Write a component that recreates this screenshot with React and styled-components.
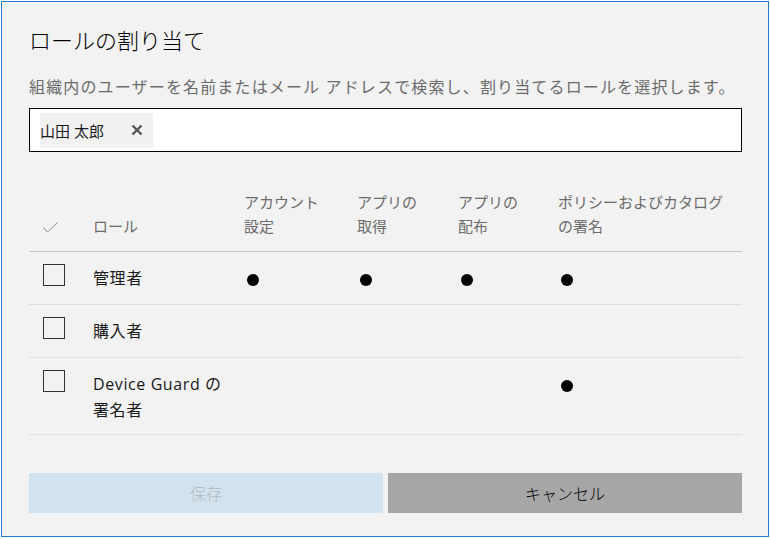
import React from 'react';
import styled, { createGlobalStyle } from 'styled-components';

const GlobalStyle = createGlobalStyle`
  html, body {
    margin: 0;
    padding: 0;
    background: #ffffff;
  }
  body {
    font-family: "Open Sans", "Noto Sans CJK JP", sans-serif;
    color: #000000;
  }
`;

const Dialog = styled.div`
  box-sizing: border-box;
  margin: 1px 0 0 1px;
  width: 768px;
  height: 536px;
  border: 1px solid #1e7fd6;
  background: #f2f2f2;
  padding: 23px 26px 0 27px;
  display: flex;
  flex-direction: column;
`;

const Title = styled.h1`
  margin: 0;
  font-size: 22px;
  line-height: 30px;
  font-weight: 300;
  color: #000000;
`;

const Description = styled.p`
  margin: 21px 0 0;
  font-size: 16px;
  line-height: 22px;
  letter-spacing: 1.15px;
  color: #6b6b6b;
  white-space: nowrap;
`;

const PeopleInput = styled.div`
  box-sizing: border-box;
  margin-top: 10px;
  height: 44px;
  border: 1px solid #000000;
  background: #ffffff;
  padding: 4px 10px;
  display: flex;
  align-items: center;
`;

const Chip = styled.div`
  height: 35px;
  width: 113px;
  box-sizing: border-box;
  background: #f1f1f1;
  display: flex;
  align-items: center;
  justify-content: space-between;
  padding: 0 10px 0 0;
  font-size: 15px;
  color: #1a1a1a;
`;

const ChipRemove = styled.span`
  display: flex;
  align-items: center;
  color: #555555;
`;

const Table = styled.div`
  margin-top: 38px;
  display: grid;
  grid-template-columns: 64px 151px 113px 101px 100px 1fr;
`;

const HeaderCell = styled.div`
  font-size: 15px;
  line-height: 24px;
  color: #6b6b6b;
  padding-bottom: 13px;
  border-bottom: 1px solid #c8c8c8;
  display: flex;
  align-items: flex-end;
  padding-left: ${(p) => p.$indent || 0}px;
`;

const Cell = styled.div`
  padding: 13px 0 13px;
  border-bottom: 1px solid #dedede;
  font-size: 16px;
  line-height: 26px;
  letter-spacing: 0.6px;
  color: #1a1a1a;
  padding-left: ${(p) => p.$indent || 0}px;
`;

const LastCell = styled(Cell)`
  padding-bottom: 11px;
`;

const Checkbox = styled.div`
  box-sizing: border-box;
  width: 22px;
  height: 22px;
  border: 1px solid #333333;
  margin-top: -1px;
`;

const Bullet = styled.span`
  display: block;
  width: 12px;
  height: 12px;
  border-radius: 50%;
  background: #000000;
  margin: 9px 0 0 3px;
`;

const CheckWrap = styled.div`
  padding-bottom: 5px;
  display: flex;
`;

const Actions = styled.div`
  margin-top: 38px;
  display: grid;
  grid-template-columns: 1fr 1fr;
  gap: 5px;
`;

const Button = styled.button`
  height: 40px;
  border: none;
  padding: 0;
  font-family: inherit;
  font-size: 16px;
  font-weight: 300;
  background: ${(p) => (p.$primary ? '#d3e2ef' : '#a6a6a6')};
  color: ${(p) => (p.$primary ? '#b4bbc2' : '#000000')};
  cursor: ${(p) => (p.disabled ? 'default' : 'pointer')};
`;

const CheckMark = () => (
  <svg width="15" height="11" viewBox="0 0 15 11">
    <polyline points="0.5,5.5 4.5,10 14.5,0.5" fill="none" stroke="#8a8a8a" strokeWidth="1" />
  </svg>
);

const Cross = () => (
  <svg width="12" height="12" viewBox="0 0 12 12">
    <path d="M1.5 1.5 L10.5 10.5 M10.5 1.5 L1.5 10.5" stroke="#555" strokeWidth="2.4" />
  </svg>
);

const columns = ['アカウント\n設定', 'アプリの\n取得', 'アプリの\n配布', 'ポリシーおよびカタログ\nの署名'];

const roles = [
  { name: '管理者', perms: [true, true, true, true] },
  { name: '購入者', perms: [false, false, false, false] },
  { name: 'Device Guard の\n署名者', perms: [false, false, false, true] },
];

const multiline = (text) =>
  text.split('\n').map((line, i) => (
    <React.Fragment key={i}>
      {i > 0 && <br />}
      {line}
    </React.Fragment>
  ));

const App = () => (
  <>
    <GlobalStyle />
    <Dialog>
      <Title>ロールの割り当て</Title>
      <Description>
        組織内のユーザーを名前またはメール アドレスで検索し、割り当てるロールを選択します。
      </Description>
      <PeopleInput>
        <Chip>
          <span>山田 太郎</span>
          <ChipRemove>
            <Cross />
          </ChipRemove>
        </Chip>
      </PeopleInput>

      <Table>
        <HeaderCell $indent={14}>
          <CheckWrap>
            <CheckMark />
          </CheckWrap>
        </HeaderCell>
        <HeaderCell>ロール</HeaderCell>
        {columns.map((c) => (
          <HeaderCell key={c}>
            <div>{multiline(c)}</div>
          </HeaderCell>
        ))}

        {roles.map((role, r) => {
          const RowCell = r === roles.length - 1 ? LastCell : Cell;
          return (
            <React.Fragment key={role.name}>
              <RowCell $indent={14}>
                <Checkbox />
              </RowCell>
              <RowCell>{multiline(role.name)}</RowCell>
              {role.perms.map((on, i) => (
                <RowCell key={i}>{on && <Bullet />}</RowCell>
              ))}
            </React.Fragment>
          );
        })}
      </Table>

      <Actions>
        <Button $primary disabled>
          保存
        </Button>
        <Button>キャンセル</Button>
      </Actions>
    </Dialog>
  </>
);

export default App;
